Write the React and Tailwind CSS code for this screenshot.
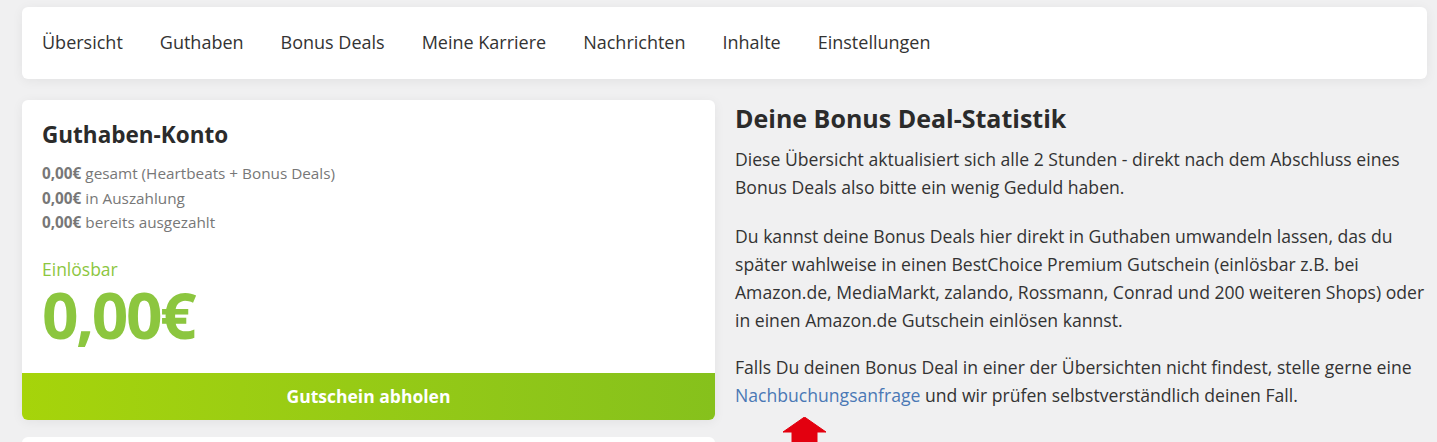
import React from 'react';

const navItems = ['Übersicht', 'Guthaben', 'Bonus Deals', 'Meine Karriere', 'Nachrichten', 'Inhalte', 'Einstellungen'];

function UpArrow() {
  return (
    <svg width="43" height="26" viewBox="0 0 43 26" className="block">
      <path d="M21.5 0 L43 15 L34 15 L34 26 L9 26 L9 15 L0 15 Z" fill="#e3000f" strokeLinejoin="round" stroke="#e3000f" strokeWidth="1" />
    </svg>
  );
}

export default function App() {
  return (
    <main className="h-[442px] overflow-hidden bg-[#f0f0f1] pl-[22px] pr-[10px] pt-[7px] text-[#333] [font-family:'Open_Sans',sans-serif]">
      <nav className="flex h-[72px] items-center gap-[37px] rounded-md bg-white px-[20px] pb-[2px] shadow-[0_2px_12px_rgba(0,0,0,0.06)]">
        {navItems.map((item) => (
          <a key={item} className="text-[18px] text-[#333]">
            {item}
          </a>
        ))}
      </nav>

      <div className="mt-[21px] grid grid-cols-[693px_1fr] gap-[20px]">
        <div>
          <section className="overflow-hidden rounded-md bg-white shadow-[0_2px_12px_rgba(0,0,0,0.06)]">
            <div className="px-[20px] pb-[30px] pt-[19px]">
              <h2 className="text-[22.5px] font-bold leading-[32px] text-[#2b2b2b]">Guthaben-Konto</h2>
              <div className="mt-[10px] text-[15.3px] leading-[24.5px] text-[#777]">
                <p><b className="font-bold">0,00€</b> gesamt (Heartbeats + Bonus Deals)</p>
                <p><b className="font-bold">0,00€</b> in Auszahlung</p>
                <p><b className="font-bold">0,00€</b> bereits ausgezahlt</p>
              </div>
              <p className="mt-[22px] text-[17.5px] leading-[24px] text-[#8cc63f]">Einlösbar</p>
              <p className="mt-[6px] text-[64px] font-bold leading-[56px] tracking-[-2.5px] text-[#8cc63f]">0,00€</p>
            </div>
            <button className="block h-[47px] w-full bg-gradient-to-r from-[#a6d40a] to-[#86c11c] text-[17.5px] font-bold text-white">
              Gutschein abholen
            </button>
          </section>
          <div className="mt-[17px] h-[20px] rounded-t-md bg-white" />
        </div>

        <section className="pt-[2px]">
          <h2 className="text-[25px] font-bold leading-[32px] text-[#2b2b2b]">Deine Bonus Deal-Statistik</h2>
          <div className="mt-[11px] text-[17.6px] leading-[28px] text-[#333]">
            <p>
              Diese Übersicht aktualisiert sich alle 2 Stunden - direkt nach dem Abschluss eines Bonus Deals also bitte ein wenig Geduld haben.
            </p>
            <p className="mt-[21px]">
              Du kannst deine Bonus Deals hier direkt in Guthaben umwandeln lassen, das du später wahlweise in einen BestChoice Premium Gutschein (einlösbar z.B. bei Amazon.de, MediaMarkt, zalando, Rossmann, Conrad und 200 weiteren Shops) oder in einen Amazon.de Gutschein einlösen kannst.
            </p>
            <p className="mt-[19px]">
              Falls Du deinen Bonus Deal in einer der Übersichten nicht findest, stelle gerne eine{' '}
              <a className="text-[#4a78b5]">Nachbuchungsanfrage</a> und wir prüfen selbstverständlich deinen Fall.
            </p>
          </div>
          <div className="ml-[48px] mt-[8px]">
            <UpArrow />
          </div>
        </section>
      </div>
    </main>
  );
}
